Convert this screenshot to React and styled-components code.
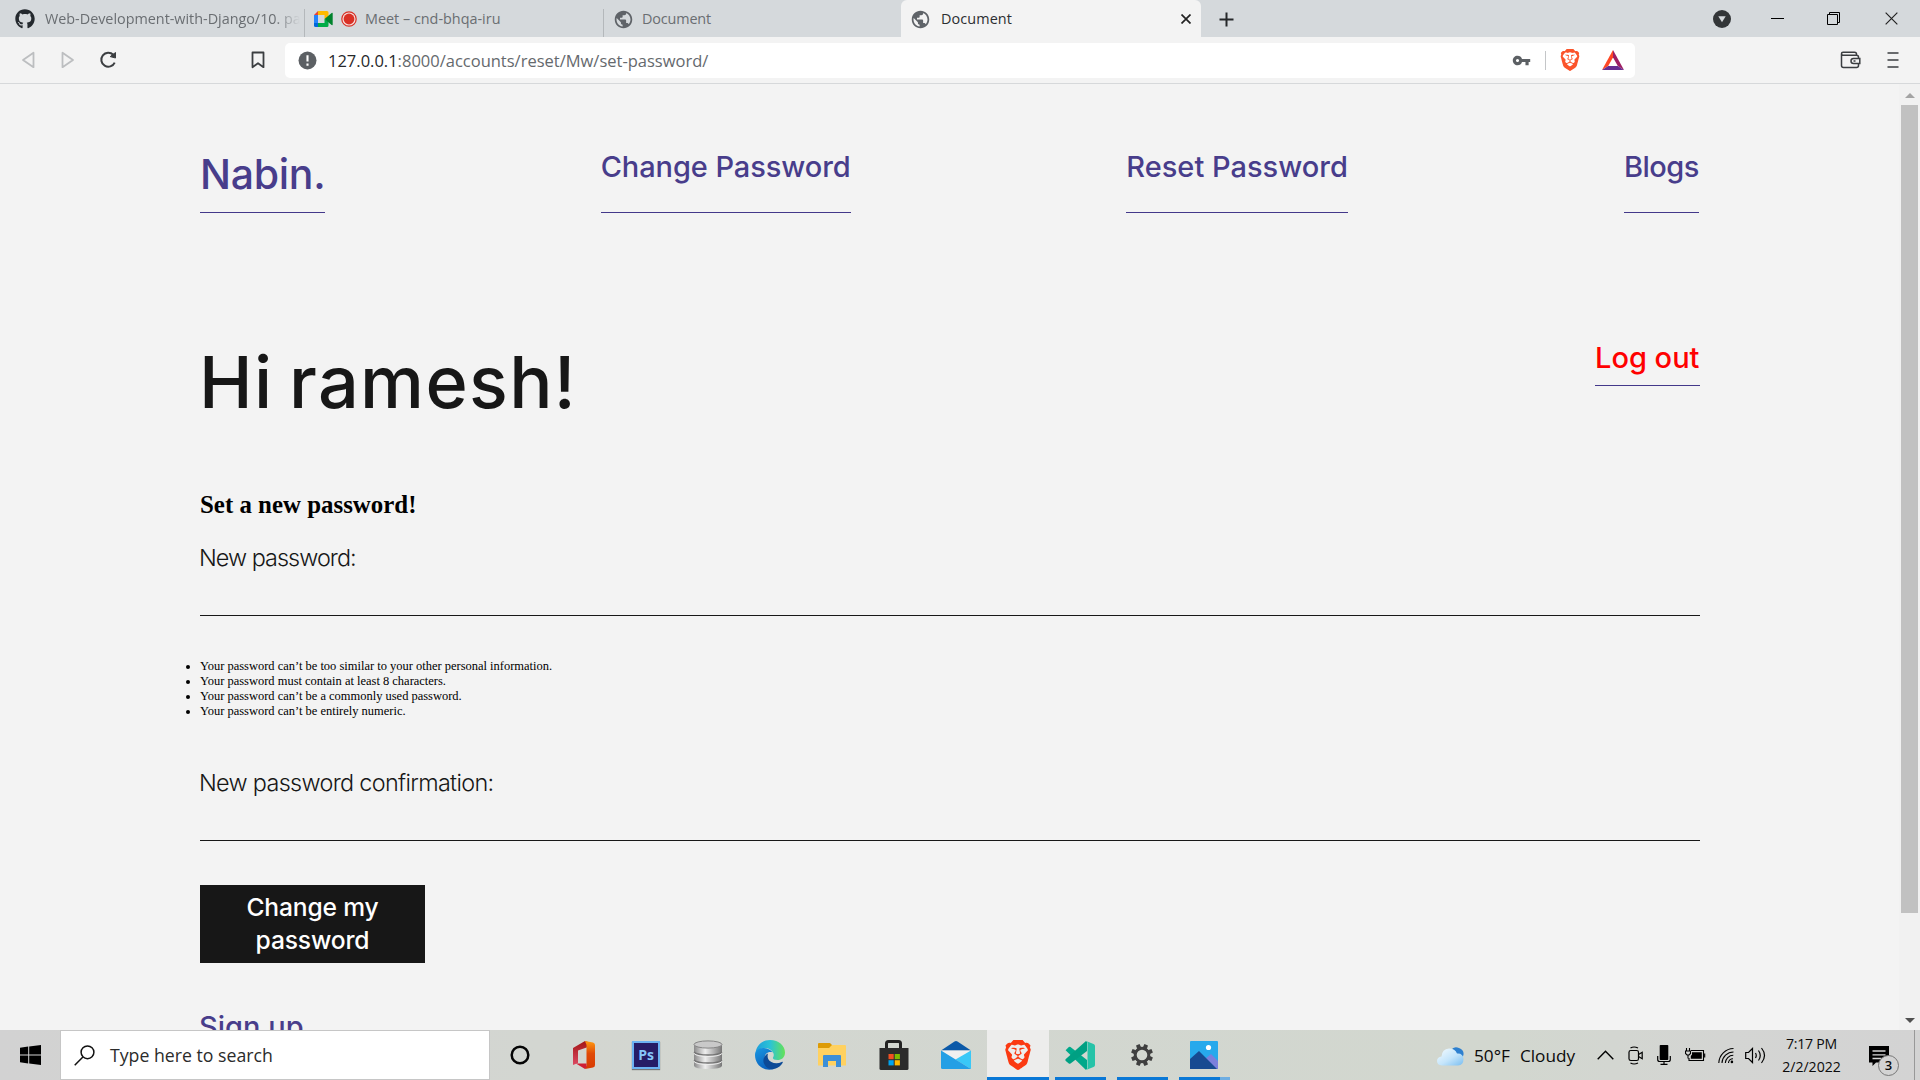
import React from 'react';
import styled, { createGlobalStyle } from 'styled-components';
import { FaGithub } from 'react-icons/fa';
import { MdPublic, MdVpnKey } from 'react-icons/md';
import { SiBrave } from 'react-icons/si';

const purple = '#483d8b';
const rulePurple = '#43388a';
const ink = '#171717';

const GlobalStyle = createGlobalStyle`
  *, *::before, *::after { box-sizing: border-box; }
  body { margin: 0; overflow: hidden; }
  svg { display: block; flex: none; }
`;

const Desktop = styled.div`
  width: 1920px;
  height: 1080px;
  display: flex;
  flex-direction: column;
  background: #f3f3f3;
  font-family: 'Open Sans', 'Noto Sans', sans-serif;
  overflow: hidden;
`;

/* ---------- browser chrome ---------- */

const TabStrip = styled.header`
  height: 37px;
  flex: none;
  display: flex;
  background: #d5d9dc;
`;

const Tab = styled.div`
  width: ${(p) => p.$width}px;
  height: 37px;
  display: flex;
  align-items: center;
  padding: 1px 10px 0 ${(p) => p.$inset}px;
  gap: ${(p) => p.$gap || 10}px;
  background: ${(p) => (p.$active ? '#f3f3f3' : 'transparent')};
  border-radius: ${(p) => (p.$active ? '6px 6px 0 0' : '0')};
  color: ${(p) => (p.$active ? '#2b2e31' : '#6a6e72')};
`;

const TabDivider = styled.i`
  width: 1px;
  height: 28px;
  margin-top: 9px;
  background: #b4b8bb;
`;

const TabTitle = styled.span`
  flex: 1;
  min-width: 0;
  overflow: hidden;
  white-space: nowrap;
  font-size: 14.4px;
  line-height: 24px;
  letter-spacing: ${(p) => p.$track || 0}px;
  ${(p) => p.$fade && 'margin-right: -6px; mask-image: linear-gradient(90deg, #000 90%, transparent);'}
`;

const NewTab = styled.div`
  width: 50px;
  display: grid;
  place-items: center;
  padding-top: 1px;
`;

const WindowControls = styled.div`
  margin-left: auto;
  display: grid;
  grid-template-columns: 56px 55px 57px 58px;
  align-items: center;
  justify-items: center;
`;

const Toolbar = styled.div`
  height: 47px;
  flex: none;
  display: flex;
  align-items: center;
  background: #f3f3f3;
  border-bottom: 1px solid #d6d8da;
`;

const NavButtons = styled.div`
  width: 285px;
  display: flex;
  align-items: center;
  padding: 0 20px 0 21px;
  color: #3b3e41;
`;

const NavIcon = styled.span`
  margin-left: ${(p) => p.$before || 0}px;
`;

const AddressBar = styled.div`
  width: 1350px;
  height: 35px;
  display: flex;
  align-items: center;
  padding: 0 11px 0 13px;
  background: #fff;
  border-radius: 5px;
`;

const Url = styled.span`
  flex: 1;
  margin-left: 11px;
  padding-top: 1px;
  font-size: 16.5px;
  line-height: 24px;
  color: #65696d;
  b { font-weight: 400; color: #26282a; }
`;

const AddressActions = styled.div`
  display: flex;
  align-items: center;
  color: #5c6064;
`;

const Separator = styled.i`
  width: 1px;
  height: 19px;
  margin: 0 13px 0 14px;
  background: #c4c6c8;
`;

const ToolbarEnd = styled.div`
  margin-left: auto;
  display: flex;
  align-items: center;
  gap: 26px;
  padding-right: 21px;
`;

/* ---------- page ---------- */

const Viewport = styled.div`
  flex: 1;
  min-height: 0;
  display: flex;
  overflow: hidden;
`;

const Page = styled.main`
  flex: 1;
  min-width: 0;
  padding: 60px 199px 0 200px;
  overflow: hidden;
  font-family: Inter, sans-serif;
`;

const Nav = styled.nav`
  display: flex;
  justify-content: space-between;
  height: 69px;
  padding-right: 1px;
`;

const NavLink = styled.a`
  width: ${(p) => p.$width}px;
  border-bottom: 1px solid ${rulePurple};
  color: ${purple};
  white-space: nowrap;
  font-weight: 500;
  font-size: ${(p) => (p.$brand ? 41 : 29)}px;
  line-height: ${(p) => (p.$brand ? 60 : 46)}px;
  letter-spacing: ${(p) => p.$track || 0}px;
`;

const Greeting = styled.div`
  display: flex;
  justify-content: space-between;
  align-items: flex-start;
  margin-top: 125px;
`;

const Title = styled.h1`
  margin: 0 0 0 -1px;
  color: ${ink};
  font-weight: 500;
  font-size: 72px;
  line-height: 88px;
  letter-spacing: 1.35px;
  word-spacing: -5px;
`;

const Logout = styled.a`
  width: 105px;
  padding-bottom: 7px;
  border-bottom: 1px solid ${rulePurple};
  color: #f00;
  white-space: nowrap;
  font-weight: 500;
  font-size: 29px;
  line-height: 40px;
`;

const FormTitle = styled.h2`
  margin: 65px 0 0;
  font-family: 'Liberation Serif', serif;
  font-weight: 700;
  font-size: 24.9px;
  line-height: 28px;
  color: #000;
`;

const Field = styled.div`
  margin-top: ${(p) => p.$before}px;
`;

const Label = styled.label`
  display: block;
  margin-left: -1px;
  color: ${ink};
  font-weight: 300;
  font-size: 23.4px;
  line-height: 30px;
  letter-spacing: ${(p) => p.$track}px;
`;

const Input = styled.input`
  display: block;
  width: 100%;
  height: 43px;
  padding: 0;
  border: 0;
  border-bottom: 1px solid ${ink};
  background: transparent;
`;

const Rules = styled.ul`
  margin: 43px 0 0;
  padding: 0;
  list-style: none;
  font-family: 'Liberation Serif', serif;
  font-size: 12.47px;
  line-height: 15px;
  color: #000;
`;

const Rule = styled.li`
  display: flex;
  align-items: center;
  margin-left: -14px;
  &::before {
    content: '';
    width: 4px;
    height: 4px;
    margin: 0 10px 0 0;
    border-radius: 50%;
    background: #000;
  }
`;

const Submit = styled.button`
  display: block;
  width: 225px;
  height: 78px;
  margin-top: 44px;
  padding: 0 40px;
  border: 0;
  background: ${ink};
  color: #fff;
  font: 550 24.6px/33px Inter, sans-serif;
  letter-spacing: -0.15px;
`;

const SignUp = styled.a`
  display: block;
  margin-top: 45px;
  margin-left: -1px;
  color: ${purple};
  font-weight: 500;
  font-size: 29px;
  line-height: 38px;
`;

const Scrollbar = styled.div`
  width: 21px;
  display: flex;
  flex-direction: column;
  align-items: center;
  background: #f1f1f1;
`;

const ScrollArrow = styled.div`
  height: 21px;
  display: grid;
  place-items: center;
  padding-top: 2px;
  color: ${(p) => (p.$dim ? '#a3a3a3' : '#505050')};
`;

const Thumb = styled.div`
  width: 17px;
  height: 808px;
  margin-bottom: auto;
  background: #c1c1c1;
`;

/* ---------- taskbar ---------- */

const Taskbar = styled.footer`
  height: 50px;
  flex: none;
  display: flex;
  background: linear-gradient(90deg, #d2d2d2, #d3d6d1 28%, #d2d7cf 78%, #d4d5d3 90%, #d3d3d3);
  color: #0b0b0b;
`;

const StartButton = styled.div`
  width: 60px;
  display: grid;
  place-items: center;
`;

const Search = styled.div`
  width: 430px;
  height: 50px;
  display: flex;
  align-items: center;
  gap: 15px;
  padding-left: 13px;
  border: 1px solid #c6c6c6;
  background: #fff;
  font-size: 17.7px;
  color: #2b2b2b;
`;

const TaskButton = styled.div`
  width: ${(p) => (p.$first ? 63 : 62)}px;
  padding-right: ${(p) => (p.$first ? 3 : 0)}px;
  display: flex;
  flex-direction: column;
  align-items: center;
  justify-content: center;
  position: relative;
  background: ${(p) => (p.$active ? '#ededec' : 'transparent')};
`;

const RunningBar = styled.i`
  position: absolute;
  left: ${(p) => (p.$full ? 0 : 6)}px;
  bottom: 0;
  width: ${(p) => (p.$full ? 62 : 51)}px;
  height: 3px;
  background: ${(p) => (p.$grouped ? 'linear-gradient(90deg, #0a78d6 41px, #6faee2 41px)' : '#0a78d6')};
`;

const Tray = styled.div`
  margin-left: auto;
  display: flex;
  align-items: center;
`;

const Weather = styled.div`
  width: 153px;
  display: flex;
  align-items: center;
  font-size: 17.2px;
  line-height: 24px;
  padding-top: 2px;
  span { margin-left: 10px; }
`;

const TrayIcon = styled.div`
  width: ${(p) => p.$width}px;
  display: grid;
  place-items: center;
`;

const Clock = styled.div`
  width: 80px;
  display: flex;
  flex-direction: column;
  align-items: center;
  padding-right: 1px;
  font-size: 14.1px;
  line-height: 23px;
  span:first-child { letter-spacing: -0.25px; }
`;

const Notifications = styled.div`
  width: 62px;
  padding: 2px 0 0 16px;
  position: relative;
`;

const Badge = styled.span`
  position: absolute;
  left: 26px;
  top: 11px;
  width: 21px;
  height: 21px;
  border: 1px solid #777;
  border-radius: 50%;
  background: #d3d3d3;
  text-align: center;
  font-size: 13px;
  line-height: 19px;
  font-weight: 600;
`;

const ShowDesktop = styled.div`
  width: 6px;
  height: 50px;
  border-left: 1px solid #989898;
`;

/* ---------- drawings ---------- */

const Meet = () => (
  <svg width="19" height="16" viewBox="0 0 19 16">
    <path d="M4 0v4H0z" fill="#ea4335" />
    <path d="M4 0h9a1.5 1.5 0 0 1 1.5 1.5V6l-4 2V4H4z" fill="#ffba00" />
    <path d="M0 4h4v8H0z" fill="#2684fc" />
    <path d="M0 12h4v4H1.5A1.5 1.5 0 0 1 0 14.500z" fill="#0066da" />
    <path d="M4 12h6.500V8l4 2v4.500A1.500 1.500 0 0 1 13 16H4z" fill="#00ac47" />
    <path d="M10.500 8 17.600 2q1.100-.5 1.100.6v10.800q0 1.100-1.100.6z" fill="#00832d" />
  </svg>
);

const RecordDot = () => (
  <svg width="16" height="16" viewBox="0 0 16 16">
    <circle cx="8" cy="8" r="7.200" fill="#f6dcda" stroke="#d93025" strokeWidth="1.200" />
    <circle cx="8" cy="8" r="5.400" fill="#d93025" />
  </svg>
);

const Triangle = ({ flip }) => (
  <svg width="14" height="18" viewBox="0 0 14 18" fill="none" stroke="#bcbec0" strokeWidth="1.800" strokeLinejoin="round">
    <path d={flip ? 'M1.500 1.800v14.400L12 9z' : 'M12.500 1.800v14.400L2 9z'} />
  </svg>
);

const Reload = () => (
  <svg width="18" height="18" viewBox="0 0 18 18" fill="none" stroke="#3b3e41" strokeWidth="2">
    <path d="M14.300 3.800A7 7 0 1 0 15.700 11.600" />
    <path d="M11.200 5.600 16.500 7V1.500z" fill="#3b3e41" stroke="#3b3e41" strokeWidth="1" strokeLinejoin="round" />
  </svg>
);

const Bookmark = () => (
  <svg width="14" height="18" viewBox="0 0 14 18" fill="none" stroke="#3b3e41" strokeWidth="1.800" strokeLinejoin="round">
    <path d="M1.500 1.500h11v14.700L7 12.200l-5.500 4z" />
  </svg>
);

const SiteInfo = () => (
  <svg width="19" height="19" viewBox="0 0 19 19">
    <circle cx="9.500" cy="9.500" r="9" fill="#5c6064" />
    <path d="M9.500 4.200v6.300M9.500 12.600v2.200" stroke="#fff" strokeWidth="2.100" />
  </svg>
);

const Rewards = () => (
  <svg width="22" height="20" viewBox="0 0 22 20">
    <path d="M11 0 0 20l6.200-4L11 7.500z" fill="#ff4724" />
    <path d="M11 0 22 20l-6.200-4L11 7.500z" fill="#9e1f63" />
    <path d="M0 20h22l-6.200-4H6.200z" fill="#662d91" />
  </svg>
);

const Wallet = () => (
  <svg width="21" height="18" viewBox="0 0 21 18" fill="none" stroke="#3b3e41" strokeWidth="1.500">
    <path d="M1.500 3v11.500a2 2 0 0 0 2 2h13a2 2 0 0 0 2-2V6.300a2 2 0 0 0-2-2H3A1.500 1.500 0 0 1 3 1.300h11.500a2 2 0 0 1 2 2v1" />
    <path d="M19.800 7.500h-6.300a2.500 2.500 0 0 0 0 5h6.300z" fill="#f3f3f3" />
    <path d="M13.500 10h2" />
  </svg>
);

const MenuLines = () => (
  <svg width="12" height="18" viewBox="0 0 12 18" stroke="#3b3e41" strokeWidth="1.700">
    <path d="M.5 2H11.500M.5 9H11.500M.5 16H11.500" />
  </svg>
);

const TabSearch = () => (
  <svg width="18" height="18" viewBox="0 0 18 18">
    <circle cx="9" cy="9" r="9" fill="#333638" />
    <path d="M5.300 6.300h7.400L9 12.300z" fill="#d5d9dc" />
  </svg>
);

const Minimise = () => (
  <svg width="13" height="13" viewBox="0 0 13 13"><path d="M0 6.500h13" stroke="#000" /></svg>
);

const Restore = () => (
  <svg width="14" height="14" viewBox="0 0 14 14" fill="none" stroke="#000">
    <path d="M.5 2.500h10v10h-10z" />
    <path d="M2.500 2.500v-2h10v10h-2" />
  </svg>
);

const Cross = ({ size, weight }) => (
  <svg width={size} height={size} viewBox="0 0 10 10" stroke="#222" strokeWidth={weight}>
    <path d="m.5.5 9 9m0-9-9 9" />
  </svg>
);

const Plus = () => (
  <svg width="15" height="15" viewBox="0 0 15 15" stroke="#26282a" strokeWidth="2"><path d="M7.500.5v14M.5 7.500h14" /></svg>
);

const Arrow = ({ down }) => (
  <svg width="10" height="5" viewBox="0 0 10 5" fill="currentColor"><path d={down ? 'M0 0h10L5 5z' : 'M0 5h10L5 0z'} /></svg>
);

const WindowsLogo = () => (
  <svg width="21" height="20" viewBox="0 0 21 20">
    <path d="M0 2.700 8.200 1.600V9.500H0zM9.200 1.400 21 0v9.500H9.200zM0 10.500h8.200v7.900L0 17.300zM9.200 10.500H21V20L9.200 18.600z" />
  </svg>
);

const Magnifier = () => (
  <svg width="21" height="21" viewBox="0 0 21 21" fill="none" stroke="#111" strokeWidth="1.500">
    <circle cx="13.500" cy="7.300" r="6.400" />
    <path d="M8.900 11.900.7 20.300" />
  </svg>
);

const Cortana = () => (
  <svg width="20" height="20" viewBox="0 0 20 20"><circle cx="10" cy="10" r="8.300" fill="none" stroke="#050505" strokeWidth="2.500" /></svg>
);

const Office = () => (
  <svg width="24" height="30" viewBox="0 0 24 30">
    <defs>
      <linearGradient id="offL" x1="0" y1="0" x2="0" y2="1"><stop offset="0" stopColor="#a31515" /><stop offset="1" stopColor="#dc4a63" /></linearGradient>
      <linearGradient id="offR" x1="0" y1="0" x2="0" y2="1"><stop offset="0" stopColor="#ff9a10" /><stop offset=".45" stopColor="#e04a08" /><stop offset="1" stopColor="#d83b01" /></linearGradient>
    </defs>
    <path d="M1 8 13 1l3 1v5L6 10.500V23l-5 2z" fill="url(#offL)" />
    <path d="m13 1 8 1.500q2 .5 2 2.500v20q0 2-2 2.500L13 29l1.500-3.500V5z" fill="url(#offR)" />
    <path d="M4 23.500h10.500V27L13 29z" fill="#cf1f35" />
  </svg>
);

const PsTile = styled.span`
  width: 28px;
  height: 28px;
  display: grid;
  place-items: center;
  border: 2px solid #6cb2f2;
  background: #261c66;
  box-shadow: 0 1px 1px #777;
  color: #86c5fa;
  font-size: 14px;
  line-height: 20px;
  font-weight: 700;
`;

const Database = () => (
  <svg width="30" height="30" viewBox="0 0 30 30">
    <defs>
      <linearGradient id="disk"><stop offset="0" stopColor="#8a8a8a" /><stop offset=".4" stopColor="#eee" /><stop offset="1" stopColor="#777" /></linearGradient>
    </defs>
    <path d="M1 4v22q1 3 14 3t14-3V4z" fill="url(#disk)" />
    <ellipse cx="15" cy="4.500" rx="14" ry="3.600" fill="#c9c9c9" stroke="#858585" />
    <path d="M1 12q3 3 14 3t14-3M1 20q3 3 14 3t14-3" fill="none" stroke="#757575" strokeWidth="1.300" />
    <path d="M1 13.500q3 3 14 3t14-3M1 21.500q3 3 14 3t14-3" fill="none" stroke="#ededed" />
  </svg>
);

const Edge = () => (
  <svg width="30" height="30" viewBox="0 0 30 30">
    <defs>
      <linearGradient id="edgeTop"><stop offset="0" stopColor="#1f9fdc" /><stop offset=".5" stopColor="#2cc3d5" /><stop offset="1" stopColor="#65e257" /></linearGradient>
      <linearGradient id="edgeMid" x1="0" y1="0" x2=".5" y2="1"><stop offset="0" stopColor="#1998e2" /><stop offset="1" stopColor="#0b60bd" /></linearGradient>
    </defs>
    <path d="M.5 13C1.500 5 7.500 0 15 0c9 0 15 6 15 12.500 0 5-3.500 7.500-7.500 7.500-3.500 0-5-1.200-4.500-2.500 1-1.500 1-3 .3-4.500C16.500 9 12 7.500 8 8.200 4.500 9 2 10.500.5 13z" fill="url(#edgeTop)" />
    <path d="M0 15C0 10.500 4 7.500 9 8c4 .3 7 2 8.500 4.300C13 11 9.500 14 9.500 18.500c0 5.500 4.500 9.500 9.500 10.500C9 32 0 25 0 15z" fill="url(#edgeMid)" />
    <path d="M13 13.500C9 15.500 7.500 20 9 23.500c2 5 7 6.500 11 5.200 3.500-1 6-3.200 7.700-6 .3-.8-.3-1-1-.7-5 2.500-11.700 1-13.500-3-.8-2-.7-4-.2-5.500z" fill="#0d4a97" />
  </svg>
);

const Folder = () => (
  <svg width="28" height="24" viewBox="0 0 28 24">
    <path d="M0 1q0-1 1-1h11l2 2v4H0z" fill="#dd9b06" />
    <path d="M0 5h11l3-3h13q1 0 1 1v19.500H0z" fill="#ffd160" />
    <path d="M5 24V13q0-1 1-1h16q1 0 1 1v11h-5v-6h-8v6z" fill="#3c8fd8" />
  </svg>
);

const Store = () => (
  <svg width="30" height="30" viewBox="0 0 30 30">
    <path d="M7.500 9V3.500q0-2 2-2h10q2 0 2 2V9" fill="none" stroke="#222" strokeWidth="3" />
    <path d="M.5 8h29v20.500q0 1.500-1.500 1.500H2q-1.500 0-1.500-1.500z" fill="#2b2b2b" />
    <path d="M9.500 14h5.200v5.200H9.500z" fill="#f25022" /><path d="M15.700 14h5.200v5.200h-5.200z" fill="#7fba00" />
    <path d="M9.500 20.200h5.200v5.200H9.500z" fill="#00a4ef" /><path d="M15.700 20.200h5.200v5.200h-5.200z" fill="#ffb900" />
  </svg>
);

const Mail = () => (
  <svg width="30" height="28" viewBox="0 0 30 28">
    <path d="M0 9.500 13.500.5q1.500-1 3 0L30 9.500z" fill="#0b59a8" />
    <path d="M0 9.500h30L15 20z" fill="#f0f0f0" />
    <path d="M30 9.500 14.500 18.500 30 28z" fill="#3ac8f7" />
    <path d="M0 9.500 30 28H1.500Q0 28 0 26.500z" fill="#249fe5" />
  </svg>
);

const CodeInsiders = () => (
  <svg width="30" height="29" viewBox="0 0 30 29">
    <path d="M.6 9.300 3.800 6q.8-.7 1.700 0L22 19v8.500L21 29z" fill="#00a88a" />
    <path d="M21 0l1 1v9L5.500 22.500q-.9.600-1.700 0L.8 20q-.9-1 0-1.900z" fill="#00a083" />
    <path d="M21 0 28.500 3q1.500.7 1.500 2v19q0 1.300-1.500 2L21 29q1.500-.6 1.500-2V2q0-1.500-1.500-2z" fill="#26c3a8" />
  </svg>
);

const Gear = () => (
  <svg width="22" height="22" viewBox="-11 -11 22 22">
    <circle r="6.800" fill="none" stroke="#3f3f3f" strokeWidth="3" />
    <g fill="#3f3f3f">
      {[0, 45, 90, 135, 180, 225, 270, 315].map((a) => (
        <path key={a} d="M-2.200-7.300-1.900-11H1.900L2.200-7.300z" transform={`rotate(${a + 22.5})`} />
      ))}
    </g>
  </svg>
);

const Photos = () => (
  <svg width="28" height="28" viewBox="0 0 28 28">
    <path d="M0 1q0-1 1-1h26q1 0 1 1v26H0z" fill="#27a9ec" />
    <path d="m15 18 6-5 7 7v8H15z" fill="#7b7fdc" />
    <path d="M0 18 9 10l18 18H0z" fill="#174a91" />
    <circle cx="18.500" cy="6.500" r="2.600" fill="#fff" />
  </svg>
);

const CloudIcon = () => (
  <svg width="27" height="19" viewBox="0 0 27 19">
    <defs><linearGradient id="cloud" x1="0" y1="0" x2="1" y2="1"><stop offset="0" stopColor="#f6fcff" /><stop offset=".55" stopColor="#c4e5fb" /><stop offset="1" stopColor="#79bdf0" /></linearGradient></defs>
    <path d="M14 3Q17-1 22 1t4.500 6q.3 3-2.500 4z" fill="#2e80cf" />
    <path d="M5 18.500q-5-.5-5-4.500 0-4 4.500-4.500Q5 2 12 1.500q6 0 8 5 6-.5 6.500 5.500 0 6-5.500 6.500z" fill="url(#cloud)" />
  </svg>
);

const Chevron = () => (
  <svg width="17" height="10" viewBox="0 0 17 10" fill="none" stroke="#000" strokeWidth="1.400"><path d="m.7 9.300 7.800-8 7.800 8" /></svg>
);

const MeetNow = () => (
  <svg width="16" height="19" viewBox="0 0 16 19" fill="none" stroke="#000" strokeWidth="1.200">
    <rect x="1" y="4.500" width="9.500" height="10" rx="1.800" />
    <path d="m10.500 8.500 3.700-2.200v6.400l-3.700-2.200M2.500 2Q6 0 10 2M2.500 17q3.500 2 7.500 0" />
  </svg>
);

const Mic = () => (
  <svg width="14" height="20" viewBox="0 0 14 20">
    <rect x="2.700" width="8.600" height="15" rx=".8" />
    <path d="M.7 11v3.500q0 2 2 2h8.600q2 0 2-2V11M7 16.500v3M3.500 19.400h7" fill="none" stroke="#000" strokeWidth="1.200" />
  </svg>
);

const Battery = () => (
  <svg width="21" height="14" viewBox="0 0 21 14" fill="none" stroke="#000" strokeWidth="1.100">
    <path d="M6 2.500h12.500v10H4V10M19.700 5.500v4M1.500 0v3M4.500 0v3M.5 3h5v2.500L4 7H2L.5 5.500zM3 7v3.500" />
    <path d="M7 4.300h9.800v6.500H5.800V8L7 6.500z" fill="#000" stroke="none" />
  </svg>
);

const Wifi = () => (
  <svg width="16" height="17" viewBox="0 0 16 17" fill="none" stroke="#000" strokeWidth="1.100">
    <path d="M.8 16A15 15 0 0 1 15.500 1.500M4 16A11.500 11.500 0 0 1 15.500 5M7.300 16a8 8 0 0 1 8-7.700M10.500 16a4.500 4.500 0 0 1 4.500-4.300" />
    <circle cx="13.900" cy="14.900" r="1.300" fill="#000" stroke="none" />
  </svg>
);

const Speaker = () => (
  <svg width="21" height="19" viewBox="0 0 21 19" fill="none" stroke="#000" strokeWidth="1.200">
    <path d="M.7 6.500h2.800L7.500 2.500v14l-4-4H.7zM10.500 7q1.500 2.500 0 5M13.500 4.500q3.500 5 0 10M16.500 2q6 7.500 0 15" />
  </svg>
);

const Message = () => (
  <svg width="22" height="20" viewBox="0 0 22 20">
    <path d="M1 0h20v16.500H8L4.500 20v-3.500H1z" />
    <path d="M4.500 5h13M4.500 8.800h13M4.500 12.500h9" stroke="#d4d4d4" strokeWidth="1.300" />
  </svg>
);

const rules = [
  'Your password can’t be too similar to your other personal information.',
  'Your password must contain at least 8 characters.',
  'Your password can’t be a commonly used password.',
  'Your password can’t be entirely numeric.',
];

const pinned = [
  { name: 'cortana', icon: <Cortana /> },
  { name: 'office', icon: <Office /> },
  { name: 'photoshop', icon: <PsTile>Ps</PsTile> },
  { name: 'database', icon: <Database /> },
  { name: 'edge', icon: <Edge /> },
  { name: 'explorer', icon: <Folder /> },
  { name: 'store', icon: <Store /> },
  { name: 'mail', icon: <Mail /> },
  { name: 'brave', icon: <SiBrave size={30} color="#fb3a12" />, running: true, active: true },
  { name: 'code', icon: <CodeInsiders />, running: true },
  { name: 'settings', icon: <Gear />, running: true },
  { name: 'photos', icon: <Photos />, running: true, grouped: true },
];

export default function App() {
  return (
    <Desktop>
      <GlobalStyle />
      <TabStrip>
        <Tab $width={304} $inset={15}>
          <FaGithub size={20} color="#24292e" />
          <TabTitle $fade $track={-0.02}>Web-Development-with-Django/10. pa</TabTitle>
        </Tab>
        <TabDivider />
        <Tab $width={298} $inset={9} $gap={8}>
          <Meet />
          <RecordDot />
          <TabTitle>Meet – cnd-bhqa-iru</TabTitle>
        </Tab>
        <TabDivider />
        <Tab $width={297} $inset={9} $gap={8}>
          <MdPublic size={21} color="#5f6368" />
          <TabTitle $track={-0.15}>Document</TabTitle>
        </Tab>
        <Tab $active $width={300} $inset={9}>
          <MdPublic size={21} color="#5f6368" />
          <TabTitle $track={0.1}>Document</TabTitle>
          <Cross size={10} weight={1.7} />
        </Tab>
        <NewTab><Plus /></NewTab>
        <WindowControls>
          <TabSearch />
          <Minimise />
          <Restore />
          <Cross size={13} weight={0.9} />
        </WindowControls>
      </TabStrip>

      <Toolbar>
        <NavButtons>
          <NavIcon><Triangle /></NavIcon>
          <NavIcon $before={26}><Triangle flip /></NavIcon>
          <NavIcon $before={24}><Reload /></NavIcon>
          <NavIcon $before={134}><Bookmark /></NavIcon>
        </NavButtons>
        <AddressBar>
          <SiteInfo />
          <Url><b>127.0.0.1</b>:8000/accounts/reset/Mw/set-password/</Url>
          <AddressActions>
            <MdVpnKey size={19} />
            <Separator />
            <SiBrave size={22} color="#fb542b" />
          </AddressActions>
          <NavIcon $before={21}><Rewards /></NavIcon>
        </AddressBar>
        <ToolbarEnd>
          <Wallet />
          <MenuLines />
        </ToolbarEnd>
      </Toolbar>

      <Viewport>
        <Page>
          <Nav>
            <NavLink $brand $width={125} $track={-0.3}>Nabin.</NavLink>
            <NavLink $width={250} $track={-0.08}>Change Password</NavLink>
            <NavLink $width={222}>Reset Password</NavLink>
            <NavLink $width={75} $track={-0.5}>Blogs</NavLink>
          </Nav>
          <Greeting>
            <Title>Hi ramesh!</Title>
            <Logout>Log out</Logout>
          </Greeting>
          <FormTitle>Set a new password!</FormTitle>
          <Field $before={24}>
            <Label $track={-0.95}>New password:</Label>
            <Input type="password" />
          </Field>
          <Rules>
            {rules.map((r) => <Rule key={r}>{r}</Rule>)}
          </Rules>
          <Field $before={49}>
            <Label $track={-0.67}>New password confirmation:</Label>
            <Input type="password" />
          </Field>
          <Submit>Change my password</Submit>
          <SignUp>Sign up</SignUp>
        </Page>
        <Scrollbar>
          <ScrollArrow $dim><Arrow /></ScrollArrow>
          <Thumb />
          <ScrollArrow><Arrow down /></ScrollArrow>
        </Scrollbar>
      </Viewport>

      <Taskbar>
        <StartButton><WindowsLogo /></StartButton>
        <Search><Magnifier />Type here to search</Search>
        {pinned.map((p, i) => (
          <TaskButton key={p.name} $first={i === 0} $active={p.active}>
            {p.icon}
            {p.running && <RunningBar $full={p.active} $grouped={p.grouped} />}
          </TaskButton>
        ))}
        <Tray>
          <Weather><CloudIcon /><span>50°F</span><span>Cloudy</span></Weather>
          <TrayIcon $width={30}><Chevron /></TrayIcon>
          <TrayIcon $width={31}><MeetNow /></TrayIcon>
          <TrayIcon $width={26}><Mic /></TrayIcon>
          <TrayIcon $width={36}><Battery /></TrayIcon>
          <TrayIcon $width={25}><Wifi /></TrayIcon>
          <TrayIcon $width={34}><Speaker /></TrayIcon>
          <Clock><span>7:17 PM</span><span>2/2/2022</span></Clock>
          <Notifications><Message /><Badge>3</Badge></Notifications>
          <ShowDesktop />
        </Tray>
      </Taskbar>
    </Desktop>
  );
}
